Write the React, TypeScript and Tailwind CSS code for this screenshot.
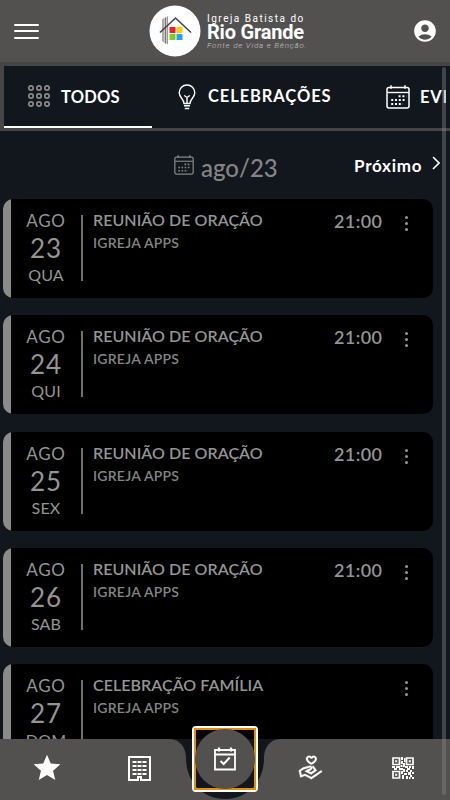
import { MdAccountCircle, MdStar } from "react-icons/md";
import { LiaHandHoldingHeartSolid } from "react-icons/lia";

type EventItem = {
  day: string;
  weekday: string;
  title: string;
  time?: string;
};

const events: EventItem[] = [
  { day: "23", weekday: "QUA", title: "REUNIÃO DE ORAÇÃO", time: "21:00" },
  { day: "24", weekday: "QUI", title: "REUNIÃO DE ORAÇÃO", time: "21:00" },
  { day: "25", weekday: "SEX", title: "REUNIÃO DE ORAÇÃO", time: "21:00" },
  { day: "26", weekday: "SAB", title: "REUNIÃO DE ORAÇÃO", time: "21:00" },
  { day: "27", weekday: "DOM", title: "CELEBRAÇÃO FAMÍLIA" },
];

const CalendarIcon = ({ className }: { className: string }) => (
  <svg viewBox="0 0 24 24" fill="none" stroke="currentColor" className={className}>
    <rect x="1" y="2.5" width="22" height="20.5" rx="2" strokeWidth="1.5" />
    <path d="M1 7.5h22" strokeWidth="1.4" />
    <path d="M5 .3v3.4M19 .3v3.4" strokeWidth="1.5" />
    <path
      d="M12.6 11.2h7.8M5.2 15h15.2M5.2 18.9h11.6"
      strokeWidth="2"
      strokeDasharray="2 1.8"
    />
  </svg>
);

const GridIcon = () => (
  <svg viewBox="0 0 22 22" className="h-[22px] w-[22px] shrink-0 text-[#8b8b8b]" fill="none" stroke="currentColor" strokeWidth="1.7">
    {[3, 11, 19].map((y) =>
      [3, 11, 19].map((x) => <circle key={`${x}-${y}`} cx={x} cy={y} r="2.2" />)
    )}
  </svg>
);

const BulbIcon = () => (
  <svg viewBox="0 0 18 26" className="h-[26px] w-[18px] shrink-0" fill="none" stroke="currentColor" strokeWidth="1.4">
    <path d="M6 19.5C6 15 1.2 13.5 1.2 8.8a7.8 7.8 0 0 1 15.6 0C16.8 13.5 12 15 12 19.5z" />
    <path d="M9 19.5V13.5M6.2 11.5 9 13.5l2.8-2M6 21.8h6M6.8 24.5h4.4" />
  </svg>
);

const Logo = () => (
  <div className="flex items-center">
    <svg viewBox="0 0 52 52" className="h-[52px] w-[52px]">
      <circle cx="26" cy="26" r="25.5" fill="#fff" />
      <path d="M13 14.5 15 13v24.5l-2-1.5z" fill="#aaa" />
      <path d="M15.6 13 17 12v27l-1.4-1z" fill="#777" />
      <path d="M17.5 12 19 11v28.5l-1.5-1z" fill="#999" />
      <path d="M11 27.5 26.5 13 42 27.5" fill="none" stroke="#444" strokeWidth="1.6" />
      <rect x="20.5" y="22" width="6" height="6" rx=".6" fill="#ee1f27" />
      <rect x="27.5" y="22" width="6" height="6" rx=".6" fill="#fccb05" />
      <rect x="20.5" y="29" width="6" height="6" rx=".6" fill="#8cc81c" />
      <rect x="27.5" y="29" width="6" height="6" rx=".6" fill="#1ba5ea" />
    </svg>
    <div className="ml-[6px] flex flex-col whitespace-nowrap pt-[2px] font-['Roboto',sans-serif]">
      <span className="text-[10px] leading-[11px] tracking-[1.5px]">Igreja Batista do</span>
      <span className="text-[20px] font-bold leading-[17px] tracking-[-0.2px]">Rio Grande</span>
      <span className="text-[8px] font-light italic leading-[10px] tracking-[0.8px] text-[#c4c4c4]">Fonte de Vida e Bênção.</span>
    </div>
  </div>
);

const BuildingIcon = () => (
  <svg viewBox="0 0 23 25" className="h-[25px] w-[23px]" fill="none" stroke="#fff">
    <path d="M1 1h21v23h-9v-3h-3v3H1z" strokeWidth="2" />
    <path d="M4.5 6h14M4.5 10h14M4.5 14h14M4.5 18h14" strokeWidth="2.2" strokeDasharray="4 1" />
  </svg>
);

const CheckCalendarIcon = () => (
  <svg viewBox="0 0 22 24" className="h-[24px] w-[22px]" fill="none" stroke="#fff">
    <path d="M1 3h20v19.5H1zM1 7.5h20" strokeWidth="1.8" />
    <path d="M5 .5v4M17 .5v4" strokeWidth="2.2" />
    <path d="m6.5 14 3.2 3 6-6.5" strokeWidth="2" />
  </svg>
);

const QrIcon = () => (
  <svg viewBox="0 0 22 22" className="h-[22px] w-[22px]" fill="#fff">
    <path
      d="M1 1h6.5v6.5H1zM14.5 1H21v6.5h-6.5zM1 14.5h6.5V21H1z"
      fill="none"
      stroke="#fff"
      strokeWidth="1.7"
    />
    <path d="M3.2 3.2h2v2h-2zM16.8 3.2h2v2h-2zM3.2 16.8h2v2h-2z" />
    <path d="M9 0h2v3H9zM12 1h1.5v4H12zM9 4h2v3H9zM11 6h2v4h-2zM0 9h3v2H0zM4 9h4v2H4zM2 11h3v2H2zM7 11h4v2H7zM8.5 8h2v2h-2zM13 9h3v2h-3zM17 9h2v2h-2zM20 9h2v3h-2zM15 11h3v2h-3zM11 12h2v3h-2zM9 14h2v3H9zM12 16h3v2h-3zM10 18h2v4h-2zM14 13h2v2h-2zM18 13h2v2h-2zM20 15h2v2h-2zM16 15h3v3h-3zM14 19h2v3h-2zM18 18h2v2h-2zM20 20h2v2h-2zM17 20h1.5v2H17z" />
  </svg>
);

const EventCard = ({ event }: { event: EventItem }) => (
  <div className="flex h-[99px] w-[430px] shrink-0 overflow-hidden rounded-[10px] bg-black text-[#959595]">
    <div className="w-2 shrink-0 bg-[#8b8b8b]" />
    <div className="flex w-[70px] shrink-0 flex-col items-center pt-[11px]">
      <span className="text-[17px] leading-[21px] tracking-[0.7px]">AGO</span>
      <span className="mt-[3px] text-[26px] leading-[28px] tracking-[0.8px]">{event.day}</span>
      <span className="mt-[3px] text-base leading-[20px] tracking-[0.2px]">{event.weekday}</span>
    </div>
    <div className="mt-4 h-[66px] w-[2px] shrink-0 bg-[#707070]" />
    <div className="ml-[10px] w-[231px] shrink-0 whitespace-nowrap pt-[11px]">
      <p className="text-base font-semibold leading-[19px] tracking-[0.05px]">{event.title}</p>
      <p className="mt-[5px] text-sm font-semibold leading-[18px] tracking-[0.25px] text-[#858585]">IGREJA APPS</p>
    </div>
    <span className="w-[69px] shrink-0 pl-[10px] pt-[11px] text-[18px] font-semibold leading-[22px] tracking-[0.4px]">
      {event.time}
    </span>
    <div className="ml-[12px] flex flex-col gap-[3px] pt-[17px]">
      <i className="h-[3px] w-[3px] rounded-full bg-current" />
      <i className="h-[3px] w-[3px] rounded-full bg-current" />
      <i className="h-[3px] w-[3px] rounded-full bg-current" />
    </div>
  </div>
);

const App = () => {
  return (
    <div className="relative flex h-[800px] w-[450px] flex-col overflow-hidden bg-[#12171d] font-['Lato',sans-serif] text-white">
      <header className="flex h-[62px] shrink-0 items-center bg-[#52514f] pl-[14px] pr-[12px]">
        <div className="flex w-[25px] flex-col gap-[4.5px]">
          <span className="h-[2px] rounded bg-white" />
          <span className="h-[2px] rounded bg-white" />
          <span className="h-[2px] rounded bg-white" />
        </div>
        <div className="ml-[110px]">
          <Logo />
        </div>
        <MdAccountCircle className="ml-auto h-[26px] w-[26px]" />
      </header>

      <nav className="h-[69px] shrink-0 border-b-[3px] border-l-4 border-t-4 border-[#464646]">
        <div className="flex h-[62px] w-[442px] items-center overflow-hidden whitespace-nowrap text-[16.5px] font-bold">
          <div className="flex h-full w-[148px] shrink-0 items-center border-b-2 border-white pl-[24px]">
            <GridIcon />
            <span className="ml-[11px] pt-[2px] tracking-[0.2px]">TODOS</span>
          </div>
          <div className="flex w-[208px] shrink-0 items-center pb-[1px] pl-[26px]">
            <BulbIcon />
            <span className="ml-[12px] tracking-[0.9px]">CELEBRAÇÕES</span>
          </div>
          <div className="flex shrink-0 items-center pl-[26px]">
            <CalendarIcon className="h-[24px] w-[24px]" />
            <span className="ml-[10px] tracking-[0.8px]">EVENTOS</span>
          </div>
        </div>
      </nav>

      <div className="flex h-[68px] shrink-0 items-start">
        <CalendarIcon className="ml-[174px] mt-[24px] h-[20px] w-[20px] text-[#858585]" />
        <span className="ml-[7px] mt-[22px] w-[153px] text-[24px] font-medium leading-[30px] text-[#858585]">ago/23</span>
        <span className="mt-[24px] w-[78px] text-[17px] font-bold leading-[22px] tracking-[0.75px]">Próximo</span>
        <svg viewBox="0 0 8 14" className="mt-[25px] h-[14px] w-[8px]" fill="none" stroke="#fff" strokeWidth="1.6">
          <path d="m1 1 6 6-6 6" />
        </svg>
      </div>

      <main className="flex flex-1 flex-col gap-[17.3px] overflow-hidden pl-[3px]">
        {events.map((event) => (
          <EventCard key={event.day} event={event} />
        ))}
      </main>

      <footer className="absolute inset-x-0 bottom-0 flex h-[61px]">
        <div className="flex w-[170px] bg-[#52514f]">
          <MdStar className="ml-[31px] mt-[13px] h-[32px] w-[32px] shrink-0" />
          <div className="ml-[65px] mt-[17px]">
            <BuildingIcon />
          </div>
        </div>
        <svg viewBox="0 0 110 61" className="h-[61px] w-[110px]">
          <path d="M0 0h110v61H0z" fill="#12171d" />
          <path d="M0 0C10 0 16 9 16 19C16 43 33 60 55 60S94 43 94 19C94 9 100 0 110 0V61H0z" fill="#52514f" />
        </svg>
        <div className="flex w-[170px] bg-[#52514f]">
          <LiaHandHoldingHeartSolid className="ml-[16px] mt-[14px] h-[29px] w-[29px] stroke-white stroke-[0.3]" />
          <div className="ml-[67px] mt-[18px]">
            <QrIcon />
          </div>
        </div>
      </footer>

      <div className="absolute left-[192px] top-[726px] h-[66px] w-[66px] rounded-[4px] border-2 border-white">
        <div className="flex h-full w-full items-center justify-center border-2 border-[#e58e05]">
          <div className="flex h-[60px] w-[60px] shrink-0 items-center justify-center rounded-full bg-[#52514f]">
            <CheckCalendarIcon />
          </div>
        </div>
      </div>

      {/* scroll thumb */}
      <div className="absolute right-1 top-[67px] h-[728px] w-1 rounded bg-[#8a8a8a]/40" />
    </div>
  );
};

export default App;
